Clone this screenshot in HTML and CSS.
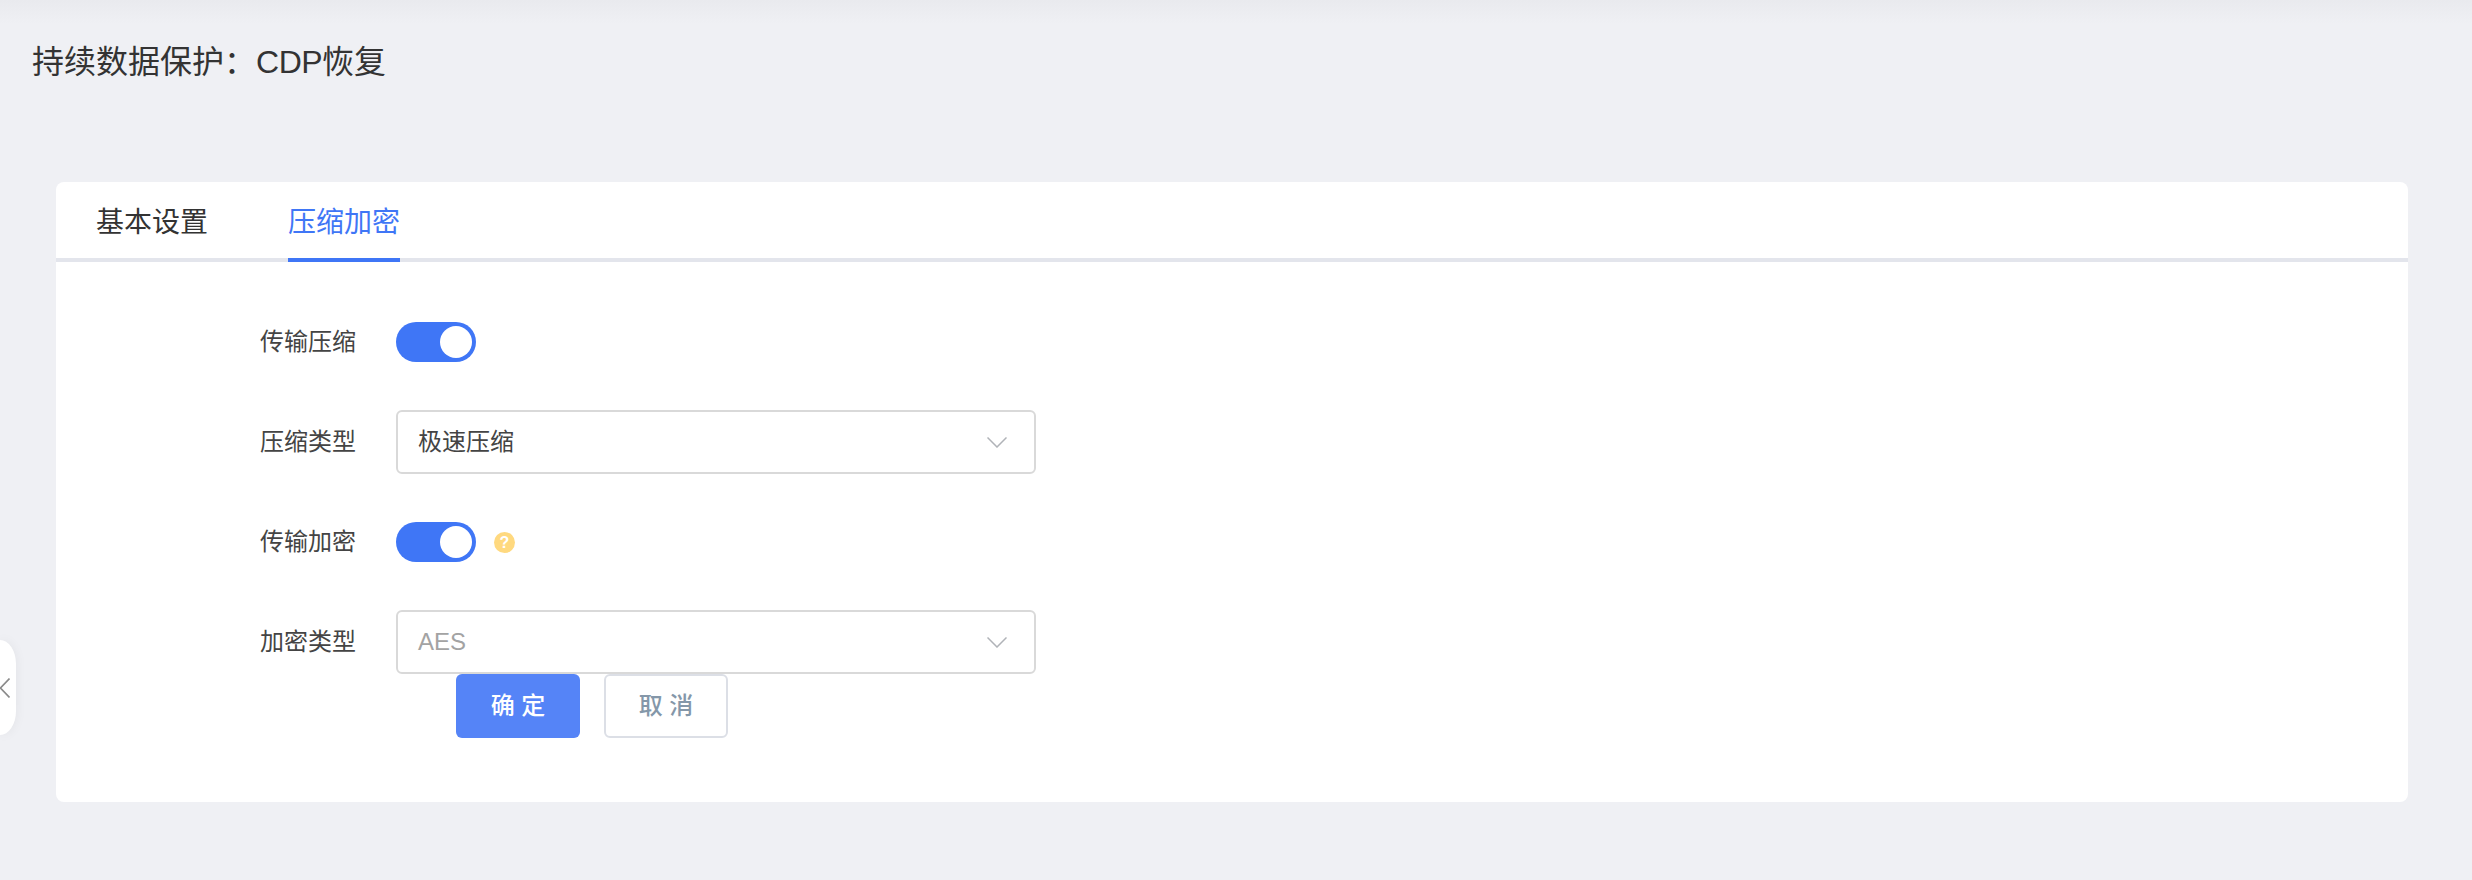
FILE: index.html
```html
<!DOCTYPE html>
<html lang="zh-CN">
<head>
<meta charset="utf-8">
<title>持续数据保护：CDP恢复</title>
<link rel="stylesheet" href="styles.css">
</head>
<body>
<div class="page">
  <h1 class="title">持续数据保护：<span class="latin">CDP</span>恢复</h1>
  <section class="card">
    <nav class="tabs">
      <span class="tab">基本设置</span>
      <span class="tab tab-active">压缩加密</span>
    </nav>
    <form class="form">
      <div class="row">
        <label class="label">传输压缩</label>
        <span class="switch"><span class="knob"></span></span>
      </div>
      <div class="row">
        <label class="label">压缩类型</label>
        <div class="select">
          <span class="value">极速压缩</span>
          <svg class="chevron" viewBox="0 0 20 11" width="20" height="11"><path d="M0.5 0.5 L10 10 L19.5 0.5" fill="none" stroke="#b0b3b8" stroke-width="1.5"/></svg>
        </div>
      </div>
      <div class="row">
        <label class="label">传输加密</label>
        <span class="switch"><span class="knob"></span></span>
        <span class="help">?</span>
      </div>
      <div class="row">
        <label class="label">加密类型</label>
        <div class="select">
          <span class="value value-disabled">AES</span>
          <svg class="chevron" viewBox="0 0 20 11" width="20" height="11"><path d="M0.5 0.5 L10 10 L19.5 0.5" fill="none" stroke="#b0b3b8" stroke-width="1.5"/></svg>
        </div>
      </div>
      <div class="actions">
        <button type="button" class="btn btn-primary">确 定</button>
        <button type="button" class="btn btn-plain">取 消</button>
      </div>
    </form>
  </section>
  <div class="collapse">
    <svg viewBox="0 0 10 20" width="10" height="20"><path d="M9.5 0.5 L0.5 10 L9.5 19.5" fill="none" stroke="#8a8a8a" stroke-width="1.6"/></svg>
  </div>
</div>
</body>
</html>
```
FILE: styles.css
```css
* { box-sizing: border-box; }
html, body { margin: 0; padding: 0; }
body {
  font-family: "Liberation Sans", "Noto Sans CJK SC", sans-serif;
  color: #333;
}
.page {
  position: relative;
  width: 2472px;
  height: 880px;
  overflow: hidden;
  padding: 42px 64px 0 56px;
  background: linear-gradient(to bottom, #e9eaee 0, #eff0f4 24px) #eff0f4;
}
.title {
  margin: 0 0 100px -24px;
  font-size: 32px;
  line-height: 40px;
  font-weight: 400;
  color: #333;
}
.latin { letter-spacing: -0.5px; }
.card {
  width: 2352px;
  height: 620px;
  background: #fff;
  border-radius: 8px;
}
.tabs {
  display: flex;
  gap: 80px;
  height: 80px;
  padding-left: 40px;
  border-bottom: 4px solid #e3e5ec;
}
.tab {
  height: 80px;
  font-size: 28px;
  line-height: 82px;
  color: #333;
}
.tab-active {
  color: #3f76f6;
  border-bottom: 4px solid #3f76f6;
}
.form { padding-top: 48px; }
.row {
  display: flex;
  align-items: center;
  height: 64px;
  margin-bottom: 36px;
}
.row:nth-child(4) { margin-bottom: 0; }
.label {
  width: 340px;
  padding-right: 40px;
  text-align: right;
  font-size: 24px;
  line-height: 32px;
  color: #444;
}
.switch {
  display: flex;
  justify-content: flex-end;
  align-items: center;
  width: 80px;
  height: 40px;
  padding-right: 4px;
  border-radius: 20px;
  background: #3f76f6;
}
.knob {
  width: 32px;
  height: 32px;
  border-radius: 50%;
  background: #fff;
}
.help {
  width: 21px;
  height: 21px;
  margin-left: 18px;
  border-radius: 50%;
  background: #ffd97f;
  color: #fff;
  font-size: 16px;
  font-weight: 700;
  line-height: 21px;
  text-align: center;
}
.select {
  display: flex;
  align-items: center;
  justify-content: space-between;
  width: 640px;
  height: 64px;
  padding: 0 27px 0 20px;
  border: 2px solid #d9d9d9;
  border-radius: 6px;
  background: #fff;
  font-size: 24px;
  line-height: 32px;
  color: #444;
}
.value-disabled { color: #a3a3a3; }
.chevron { display: block; }
.actions {
  display: flex;
  gap: 24px;
  margin-left: 400px;
}
.btn {
  width: 124px;
  height: 64px;
  padding: 0;
  border-radius: 6px;
  font-family: inherit;
  font-size: 24px;
  line-height: 32px;
  font-weight: 500;
}
.btn-primary {
  border: 0;
  background: #5584f7;
  color: #fff;
}
.btn-plain {
  border: 2px solid #dcdfe6;
  background: #fff;
  color: #8497a9;
}
.collapse {
  position: absolute;
  left: 0;
  top: 640px;
  display: flex;
  align-items: center;
  width: 16px;
  height: 95px;
  border-radius: 0 16px 16px 0 / 0 24px 24px 0;
  background: #fff;
  box-shadow: 0 0 12px rgba(0, 0, 0, 0.06);
}
```
